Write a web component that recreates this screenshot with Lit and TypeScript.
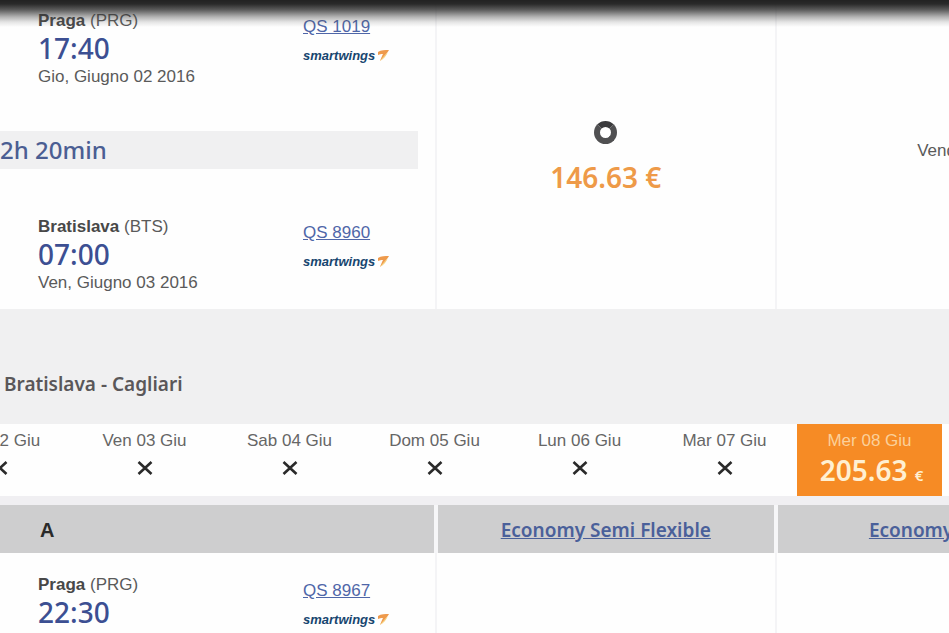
import { LitElement, html, css, svg, nothing } from "lit";
import { customElement, property } from "lit/decorators.js";

interface Leg {
  city: string;
  code: string;
  time: string;
  date: string;
  flight: string;
}

interface Day {
  label: string;
  price?: string;
}

const outbound: Leg[] = [
  { city: "Praga", code: "PRG", time: "17:40", date: "Gio, Giugno 02 2016", flight: "QS 1019" },
  { city: "Bratislava", code: "BTS", time: "07:00", date: "Ven, Giugno 03 2016", flight: "QS 8960" },
];

const inbound: Leg = {
  city: "Praga", code: "PRG", time: "22:30", date: "Mer, Giugno 08 2016", flight: "QS 8967",
};

const days: Day[] = [
  { label: "Gio 02 Giu" },
  { label: "Ven 03 Giu" },
  { label: "Sab 04 Giu" },
  { label: "Dom 05 Giu" },
  { label: "Lun 06 Giu" },
  { label: "Mar 07 Giu" },
  { label: "Mer 08 Giu", price: "205.63" },
];

const crossShape = svg`<path d="M1.5 2 L14.5 14 M14.5 2 L1.5 14" fill="none" stroke="#2a2a2a" stroke-width="2.6"/>`;

@customElement("flight-leg")
export class FlightLeg extends LitElement {
  @property({ attribute: false }) leg!: Leg;

  static styles = css`
    :host {
      display: grid;
      grid-template-columns: 265px 1fr;
      padding-left: 38px;
      color: #5a5a5a;
      font-size: 17px;
      line-height: 22px;
      white-space: nowrap;
    }
    .city { font-weight: 700; color: #484848; }
    .time {
      font-family: "Noto Sans", "Open Sans", sans-serif;
      font-size: 28px;
      font-weight: 500;
      line-height: 32px;
      color: #3c4f92;
    }
    .date { line-height: 26px; }
    .carrier { padding-top: 6px; }
    .number { color: #4f66a8; }
    .logo {
      display: flex;
      align-items: center;
      gap: 2px;
      height: 16px;
      margin-top: 10px;
      font-size: 13px;
      font-weight: 700;
      font-style: italic;
      color: #17456f;
    }
    .wing { width: 12px; height: 14px; }
  `;

  render() {
    const { city, code, time, date, flight } = this.leg;
    return html`
      <div>
        <div><span class="city">${city}</span> (${code})</div>
        <div class="time">${time}</div>
        <div class="date">${date}</div>
      </div>
      <div class="carrier">
        <a class="number" href="#">${flight}</a>
        <div class="logo">
          smartwings
          <svg class="wing" viewBox="0 0 12 14" aria-hidden="true">
            <path d="M1 3 C4 1 8 1 12 1 C10 4 8 7 3 12 C4 9 5 7 6 5 C4 5 3 5 1 6 Z" fill="#ee9a4c" />
            <path d="M3 12 C7 10 9 7 11 3 C8 6 6 8 3 12 Z" fill="#f6cf7a" />
          </svg>
        </div>
      </div>
    `;
  }
}

@customElement("app-root")
export class AppRoot extends LitElement {
  static styles = css`
    :host {
      display: block;
      position: relative;
      min-height: 100vh;
      max-height: 100vh;
      overflow: hidden;
      background: #fefefe;
      color: #5a5a5a;
      font-family: "Liberation Sans", Arial, sans-serif;
      font-size: 17px;
      line-height: 22px;
    }
    .shade {
      position: absolute;
      inset: 0 0 auto 0;
      height: 27px;
      background: linear-gradient(#222 0, #2a2a2a 4px, rgba(40, 40, 40, 0.75) 10px, rgba(60, 60, 60, 0.38) 17px, rgba(80, 80, 80, 0.15) 22px, rgba(80, 80, 80, 0) 100%);
      pointer-events: none;
    }
    .fares {
      width: 118%;
      table-layout: fixed;
      border-collapse: collapse;
      background: #fefefe;
    }
    .route { width: 38.9%; }
    .class { width: 30.4%; }
    td, th { padding: 0; }
    td + td { border-left: 2px solid #f4f4f6; }
    .legs { vertical-align: top; padding: 10px 0 13px; }
    .inbound { padding-top: 21px; }
    .fare { text-align: center; vertical-align: middle; }
    .soldout { padding-bottom: 8px; }
    .layover {
      margin: 41px 17px 47px 0;
      background: #f0f0f1;
      font-family: "Noto Sans", "Open Sans", sans-serif;
      font-size: 24px;
      font-weight: 500;
      line-height: 38px;
      color: #4b5e93;
    }
    .option { display: block; padding-top: 7px; }
    .radio {
      appearance: none;
      display: block;
      width: 23px;
      height: 23px;
      margin: 0 auto 15px;
      border: 6px solid #505052;
      border-top-color: #3a3a3c;
      border-radius: 50%;
      background: #fff;
    }
    .price {
      display: block;
      font-family: "Noto Sans", "Open Sans", sans-serif;
      font-size: 28px;
      font-weight: 600;
      line-height: 36px;
      color: #ee9a48;
    }
    .heading {
      margin: 0;
      padding: 62px 4px 27px;
      background: #f0f0f1;
      font-family: "Noto Sans", "Open Sans", sans-serif;
      font-size: 19px;
      font-weight: 600;
      line-height: 26px;
      color: #5a5759;
    }
    .days {
      display: flex;
      justify-content: flex-end;
      padding-right: 7px;
      background: #fefefe;
      border-bottom: 9px solid #f0eff2;
    }
    .day {
      box-sizing: border-box;
      display: flex;
      flex: 0 0 145px;
      flex-direction: column;
      align-items: center;
      gap: 8px;
      height: 72px;
      padding: 6px 0 0;
      border: 0;
      background: none;
      color: #666;
      font: inherit;
      white-space: nowrap;
    }
    .chosen { gap: 0; background: #f68b25; color: #fbd09a; }
    .cross { width: 16px; height: 16px; }
    .amount {
      padding-left: 4px;
      font-family: "Noto Sans", "Open Sans", sans-serif;
      font-size: 28px;
      font-weight: 600;
      line-height: 36px;
      color: #fff0d2;
    }
    .euro { font-size: 15px; }
    .head {
      box-sizing: border-box;
      height: 48px;
      padding-top: 2px;
      background: #cececf;
      font-family: "Noto Sans", "Open Sans", sans-serif;
      font-size: 19px;
      font-weight: 600;
      color: #2a2a2a;
    }
    .head + .head { border-left: 4px solid #f6f6f8; }
    .airport {
      padding-left: 40px;
      text-align: left;
      font-family: inherit;
      font-size: 20px;
      font-weight: 700;
    }
    .link { color: #4a609a; }
  `;

  private renderDay(day: Day) {
    return html`
      <button class="day ${day.price ? "chosen" : ""}" type="button">
        <span>${day.label}</span>
        ${day.price
          ? html`<span class="amount">${day.price} <span class="euro">€</span></span>`
          : html`<svg class="cross" viewBox="0 0 16 16" aria-hidden="true">${crossShape}</svg>`}
      </button>
    `;
  }

  private columns() {
    return html`<colgroup><col class="route" /><col class="class" /><col /></colgroup>`;
  }

  render() {
    return html`
      <table class="fares">
        ${this.columns()}
        <tbody>
          <tr>
            <td class="legs">
              ${outbound.map((leg, i) => html`
                ${i ? html`<div class="layover">2h 20min</div>` : nothing}
                <flight-leg .leg=${leg}></flight-leg>
              `)}
            </td>
            <td class="fare">
              <label class="option">
                <input class="radio" type="radio" name="outbound" />
                <span class="price">146.63 €</span>
              </label>
            </td>
            <td class="fare soldout">Venduto</td>
          </tr>
        </tbody>
      </table>
      <h2 class="heading">Bratislava - Cagliari</h2>
      <div class="days">${days.map((day) => this.renderDay(day))}</div>
      <table class="fares">
        ${this.columns()}
        <thead>
          <tr>
            <th class="head airport">A</th>
            <th class="head"><a class="link" href="#">Economy Semi Flexible</a></th>
            <th class="head"><a class="link" href="#">Economy Flexible</a></th>
          </tr>
        </thead>
        <tbody>
          <tr>
            <td class="legs inbound"><flight-leg .leg=${inbound}></flight-leg></td>
            <td></td>
            <td></td>
          </tr>
        </tbody>
      </table>
      <div class="shade"></div>
    `;
  }
}
